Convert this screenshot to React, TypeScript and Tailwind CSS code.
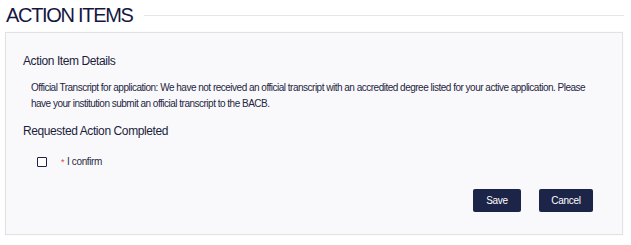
import React from "react";

export default function App() {
  const font = { fontFamily: '"Liberation Sans", Arial, sans-serif' };
  return (
    <div className="w-[631px] h-[245px] bg-white" style={font}>
      <div className="flex items-center pl-[6px] pr-[7px] pt-[3px] h-[26px]">
        <h1 className="text-[20px] leading-[24px] text-[#16173f] tracking-[-1.3px]">ACTION ITEMS</h1>
        <div className="flex-1 ml-[11px] h-px bg-[#e6e6e8] mt-[1px]" />
      </div>
      <div className="ml-[5px] mt-[6px] w-[618px] h-[203px] border border-[#e2e2e6] bg-[#f9f9fb] shadow-[0_0_1px_rgba(0,0,0,0.08)] flex flex-col pl-[17px] pr-[29px]">
        <div className="mt-[20px] text-[12px] leading-[16px] tracking-[-0.4px] text-[#1c1d3d]">Action Item Details</div>
        <p className="mt-[11px] ml-[8px] text-[10px] leading-[16px] tracking-[-0.5px] text-[#25263f]">
          Official Transcript for application: We have not received an official transcript with an accredited degree listed for your active application. Please have your institution submit an official transcript to the BACB.
        </p>
        <div className="mt-[11px] text-[12px] leading-[16px] tracking-[-0.4px] text-[#1c1d3d]">Requested Action Completed</div>
        <div className="mt-[17px] ml-[14px] flex items-center">
          <span className="w-[10px] h-[10px] border-[1.5px] border-[#1f2142] rounded-[1px] bg-white" />
          <span className="ml-[14px] text-[10px] leading-[12px] tracking-[-0.4px] text-[#2a2b44]">
            <span className="text-[#e0413c] mr-[3px] text-[9px] align-top">*</span>I confirm
          </span>
        </div>
        <div className="mt-[21px] flex justify-end gap-[18px]">
          <button className="w-[48px] h-[23px] rounded-[2px] bg-[#1c2447] text-white text-[10px] tracking-[-0.3px]">Save</button>
          <button className="w-[54px] h-[23px] rounded-[2px] bg-[#1c2447] text-white text-[10px] tracking-[-0.3px]">Cancel</button>
        </div>
      </div>
    </div>
  );
}
